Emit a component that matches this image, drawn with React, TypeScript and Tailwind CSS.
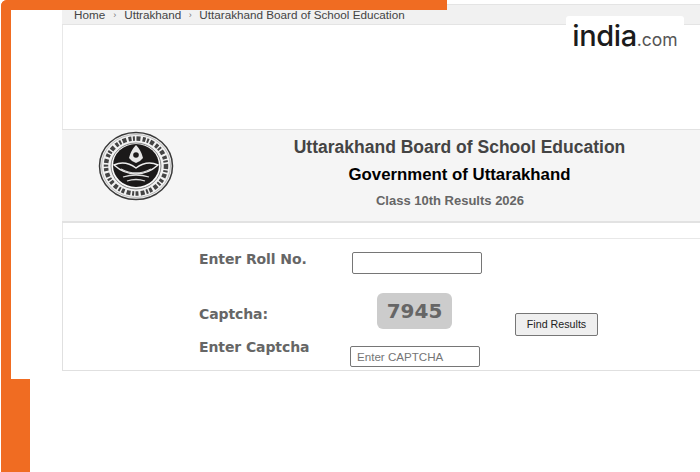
import React from 'react';

const Seal: React.FC = () => (
    <svg width="76" height="70" viewBox="0 0 76 70" className="shrink-0">
        <ellipse cx="38" cy="35" rx="36.5" ry="33.5" fill="#f2f2f2" stroke="#3a3a3a" strokeWidth="1.5" />
        <ellipse cx="38" cy="35" rx="34.5" ry="31.5" fill="none" stroke="#999" strokeWidth="0.6" />
        {/* lettering ring, too small to read in the source */}
        <ellipse cx="38" cy="35" rx="30" ry="27.5" fill="none" stroke="#444" strokeWidth="4.5" strokeDasharray="3 1.4 2 1.6 4 2.2" />
        <ellipse cx="38" cy="35" rx="25" ry="23" fill="#fafafa" stroke="#555" strokeWidth="0.7" />
        <ellipse cx="38" cy="34.5" rx="23" ry="21.5" fill="#1b1919" />
        {/* peak */}
        <path d="M38 14 Q33 19 31 27 Q34 31 38 32 Q42 31 45 27 Q43 19 38 14 Z" fill="#e6e6e6" />
        <circle cx="38" cy="24" r="2.8" fill="#1b1919" />
        {/* ridge and water */}
        <path d="M16 34 Q27 29 38 37 Q49 29 60 34 Q50 43 38 43 Q26 43 16 34 Z" fill="none" stroke="#ececec" strokeWidth="1.5" />
        <path d="M23 38 Q38 46 53 38 M25 46 Q38 42 51 46 M29 50 Q38 47 47 50" fill="none" stroke="#dcdcdc" strokeWidth="1.3" />
    </svg>
);

const App: React.FC = () => {
    return (
        <div className="relative h-[472px] w-[700px] overflow-hidden bg-white font-['Liberation_Sans',Arial,sans-serif]">
            {/* Orange frame */}
            <div className="absolute left-[1px] top-0 h-[10px] w-[446px] rounded-tl-[6px] bg-[#f06c22]" />
            <div className="absolute left-[1px] top-0 h-[380px] w-[10px] rounded-tl-[6px] bg-[#f06c22]" />
            <div className="absolute bottom-0 left-[1px] h-[93px] w-[29px] bg-[#f06c22]" />

            {/* Logo badge */}
            <div className="absolute left-[566px] top-[16px] flex h-[36px] w-[118px] items-start justify-center rounded-t-[3px] bg-white pt-[2px]">
                <span className="font-['Inter',sans-serif] text-[29px] leading-[36px] font-medium tracking-[-0.4px] text-[#1b1b1b]">india</span>
                <span className="font-['Inter',sans-serif] text-[17.5px] leading-[43px] font-normal text-[#555]">.com</span>
            </div>

            <div className="ml-[62px] flex w-[638px] flex-col pt-[4px]">
                {/* Breadcrumb */}
                <div className="flex h-[21px] items-center border-y border-[#e4e4e4] bg-[#f1f1f1] pl-[12px] pt-[1px] text-[11.7px] leading-[14px] text-[#444]">
                    <span>Home</span>
                    <span className="mx-[8px] text-[9px] text-[#777]">›</span>
                    <span>Uttrakhand</span>
                    <span className="mx-[7.5px] text-[9px] text-[#777]">›</span>
                    <span>Uttarakhand Board of School Education</span>
                </div>

                <div className="h-[104px] border-l border-[#e8e8e8]" />

                {/* Title band */}
                <div className="flex h-[94px] border-t border-b-2 border-[#e2e2e2] bg-[#f5f5f5] pl-[36px] pt-[1px]">
                    <Seal />
                    <div className="ml-[120px] flex w-[331px] flex-col items-center pt-[6px]">
                        <h1 className="text-[17.5px] leading-[21px] font-bold whitespace-nowrap text-[#444]">Uttarakhand Board of School Education</h1>
                        <h2 className="mt-[7px] text-[16.8px] leading-[19px] font-bold whitespace-nowrap text-black">Government of Uttarakhand</h2>
                        <h3 className="mt-[10px] ml-[-19px] text-[13px] leading-[14px] font-bold whitespace-nowrap text-[#666]">Class 10th Results 2026</h3>
                    </div>
                </div>

                <div className="h-[16px] border-b border-l border-[#e8e8e8]" />

                {/* Form */}
                <div className="flex h-[132px] flex-col border-b border-l border-[#e0e0e0] pl-[136px] pt-[13px] font-['DejaVu_Sans',sans-serif] font-bold text-[#666]">
                    <div className="flex items-start">
                        <label className="mt-[-2px] w-[153px] text-[14px] leading-[18px] tracking-[-0.1px]">Enter Roll No.</label>
                        <input className="h-[22px] w-[130px] rounded-[2px] border border-[#767676] bg-white" />
                    </div>
                    <div className="mt-[19px] flex items-start">
                        <label className="mt-[12px] w-[178px] text-[14px] leading-[18px] tracking-[-0.1px]">Captcha:</label>
                        <div className="flex h-[36px] w-[75px] items-center justify-center rounded-[6px] bg-[#cccccc] pb-[1px] text-[20px] text-[#666]">7945</div>
                        <button className="ml-[63px] mt-[20px] h-[23px] w-[83px] rounded-[2px] border border-[#767676] bg-[#efefef] font-['Liberation_Sans',Arial,sans-serif] text-[10.7px] font-normal text-[#222]">Find Results</button>
                    </div>
                    <div className="mt-[10px] flex items-start">
                        <label className="mt-[-8px] w-[151px] text-[14px] leading-[18px] tracking-[-0.1px]">Enter Captcha</label>
                        <input
                            placeholder="Enter CAPTCHA"
                            className="h-[21px] w-[130px] rounded-[2px] border border-[#767676] bg-white px-[6px] font-['Liberation_Sans',Arial,sans-serif] text-[11.6px] font-normal placeholder:text-[#757575]"
                        />
                    </div>
                </div>
            </div>
        </div>
    );
};

export default App;
